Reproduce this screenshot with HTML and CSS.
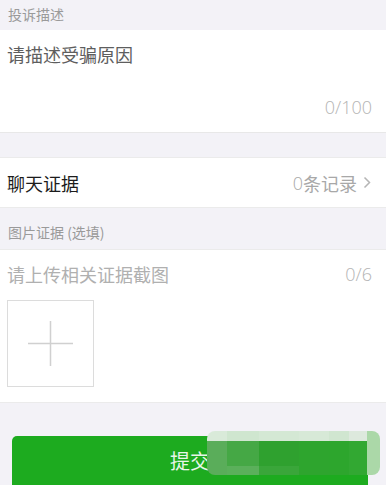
FILE: index.html
```html
<!DOCTYPE html>
<html lang="zh-CN">

<head>
    <meta charset="UTF-8">
    <meta name="viewport" content="width=device-width, initial-scale=1.0">
    <title>投诉</title>
    <link rel="stylesheet" href="styles.css">
</head>

<body>
    <div class="page">
        <div class="section-title first">投诉描述</div>
        <div class="desc">
            <div class="placeholder">请描述受骗原因</div>
            <div class="counter">0/100</div>
        </div>

        <div class="row">
            <span class="row-title">聊天证据</span>
            <span class="row-value"><span class="num">0</span>条记录
                <svg class="arrow" width="8" height="13" viewBox="0 0 8 13">
                    <path d="M1.5 1.5 L6.5 6.5 L1.5 11.5" fill="none" stroke="#b5b5b5" stroke-width="1.5" />
                </svg>
            </span>
        </div>

        <div class="section-title second">图片证据 (选填)</div>
        <div class="upload">
            <div class="upload-head">
                <span class="hint">请上传相关证据截图</span>
                <span class="count">0/6</span>
            </div>
            <div class="add-box">
                <svg width="45" height="45" viewBox="0 0 45 45">
                    <path d="M0 22.5 H45 M22.5 0 V45" stroke="#d0d0d0" stroke-width="1.5" />
                </svg>
            </div>
        </div>

        <div class="footer">
            <button class="submit">提交</button>
            <div class="mosaic">
                <div class="cell c1"></div>
                <div class="cell c2"></div>
                <div class="cell c3"></div>
                <div class="cell c4"></div>
                <div class="cell c5"></div>
                <div class="cell c6"></div>
                <div class="cell c7"></div>
            </div>
        </div>
    </div>
</body>

</html>
```

FILE: styles.css
```css
body {
    margin: 0;
    background-color: #f3f2f7;
    font-family: "Noto Sans CJK SC", "Noto Sans", sans-serif;
    overflow: hidden;
}

.page {
    width: 386px;
}

.section-title {
    padding-left: 8px;
    font-size: 14px;
    color: #9a9a9a;
}

.section-title.first {
    height: 30px;
    line-height: 28px;
}

.section-title.second {
    height: 42px;
    line-height: 48px;
    border-top: 1px solid #ebebeb;
    box-sizing: border-box;
}

.desc {
    background-color: #fff;
    height: 103px;
    box-sizing: border-box;
    padding: 12px 14px 0 7px;
    border-bottom: 1px solid #e8e8e8;
}

.placeholder {
    font-size: 18px;
    line-height: 25px;
    color: #5e5e5e;
}

.counter {
    text-align: right;
    margin-top: 28px;
    font-family: "Open Sans", "Noto Sans", sans-serif;
    font-weight: 300;
    font-size: 18px;
    line-height: 25px;
    color: #b4b4b4;
}

.row {
    margin-top: 24px;
    height: 49px;
    background-color: #fff;
    display: flex;
    align-items: center;
    justify-content: space-between;
    padding: 0 15px 0 7px;
    border-top: 1px solid #ebebeb;
}

.row-title {
    font-size: 18px;
    color: #1c1c1c;
}

.row-value {
    display: flex;
    align-items: center;
    gap: 6px;
    font-size: 18px;
    color: #a8a8a8;
}

.num {
    font-family: "Open Sans", "Noto Sans", sans-serif;
    font-weight: 300;
    margin-right: -6px;
}

.upload {
    background-color: #fff;
    height: 154px;
    box-sizing: border-box;
    padding: 12px 14px 0 7px;
    border-top: 1px solid #ebebeb;
    border-bottom: 1px solid #ebebeb;
}

.upload-head {
    display: flex;
    justify-content: space-between;
    line-height: 25px;
}

.hint {
    font-size: 18px;
    color: #b0b0b0;
}

.count {
    font-family: "Open Sans", "Noto Sans", sans-serif;
    font-weight: 300;
    font-size: 18px;
    color: #b4b4b4;
}

.add-box {
    margin-top: 13px;
    width: 87px;
    height: 87px;
    box-sizing: border-box;
    border: 1px solid #dcdcdc;
    display: flex;
    align-items: center;
    justify-content: center;
}

.footer {
    position: relative;
    padding: 33px 18px 0 12px;
}

.submit {
    width: 100%;
    height: 56px;
    border: none;
    border-radius: 5px;
    background-color: #1dab1f;
    color: #e8f5e8;
    font-family: "Noto Sans CJK SC", sans-serif;
    font-size: 20px;
    padding-bottom: 8px;
}

.mosaic {
    position: absolute;
    left: 207px;
    top: 28px;
    width: 173px;
    height: 44px;
    border-radius: 8px;
    overflow: hidden;
    display: flex;
}

.cell {
    height: 100%;
}

.c1 { width: 20px; background: linear-gradient(#d9ead9 22%, #5aad5a 22%); }
.c2 { width: 32px; background: linear-gradient(#cfe6cf 22%, #45a845 22%, #45a845 80%, #5bb05b 80%); }
.c3 { width: 40px; background: linear-gradient(#d4e8d4 22%, #2fa12f 22%, #2fa12f 80%, #3aa63a 80%); }
.c4 { width: 30px; background: linear-gradient(#d7e9d7 22%, #2ea52e 22%); }
.c5 { width: 20px; background: linear-gradient(#d0e6d0 22%, #2da62d 22%); }
.c6 { width: 18px; background: linear-gradient(#dde9dd 22%, #32a832 22%); }
.c7 { width: 13px; background: #abd8a8; }
```
